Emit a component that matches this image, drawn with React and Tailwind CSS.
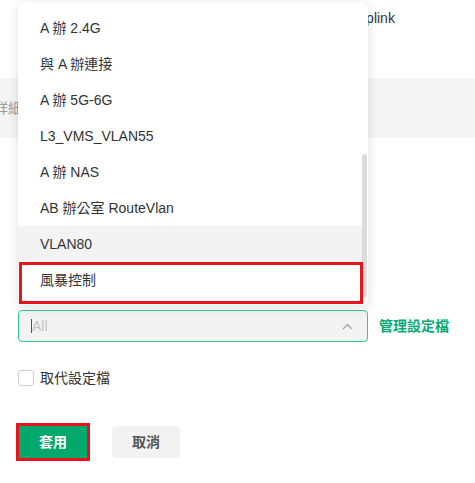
import React from "react";

const FONT = { fontFamily: "'Liberation Sans', Arial, 'Noto Sans CJK TC', sans-serif" };

const items = [
  "A 辦 2.4G",
  "與 A 辦連接",
  "A 辦 5G-6G",
  "L3_VMS_VLAN55",
  "A 辦 NAS",
  "AB 辦公室 RouteVlan",
  "VLAN80",
  "風暴控制",
];

function Dropdown() {
  return (
    <div className="absolute left-[18px] top-[2px] w-[350px] h-[303px] bg-white rounded-[6px] shadow-[0_2px_12px_rgba(0,0,0,0.13)] z-10 flex">
      <ul className="flex-1 pt-[8px]">
        {items.map((t, i) => (
          <li
            key={t}
            className={
              "h-[36px] flex items-center pl-[22px] text-[14px] text-[#333] " +
              (i === 6 ? "bg-[#f3f3f3]" : "")
            }
          >
            {t}
          </li>
        ))}
      </ul>
      <div className="w-[5px] mr-[1px] pt-[152px] pb-[8px]">
        <div className="h-full rounded-full bg-[#dcdcdc]" />
      </div>
      {/* annotation box */}
      <div className="absolute left-[1px] top-[260px] w-[344px] h-[42px] border-[3px] border-[#e8141b]" />
    </div>
  );
}

export default function App() {
  return (
    <div className="relative w-[475px] h-[483px] bg-white overflow-hidden" style={FONT}>
      <div className="h-[78px] pt-[8px] pl-[356px] text-[14px] leading-[20px] text-[#333]">Uplink</div>
      <div className="h-[60px] bg-[#f5f5f5] flex items-center -ml-[6px] text-[14px] text-[#999]">詳細</div>

      <div className="pl-[18px] pt-[172px]">
        <div className="flex items-center gap-[11px]">
          <div className="w-[350px] h-[32px] rounded-[4px] border border-[#2fcb8c] bg-[#f3f3f3] flex items-center pl-[12px] pr-[14px]">
            <span className="w-[1px] h-[14px] bg-[#1f6b4a]" />
            <span className="text-[14px] text-[#c4c4c4] flex-1">All</span>
            <svg width="11" height="7" viewBox="0 0 11 7" fill="none">
              <polyline points="1,6 5.5,1.5 10,6" stroke="#a8a8a8" strokeWidth="1.4" />
            </svg>
          </div>
          <span className="text-[14px] font-bold text-[#0aa875]">管理設定檔</span>
        </div>

        <label className="mt-[28px] flex items-center gap-[6px] h-[16px]">
          <span className="w-[16px] h-[16px] rounded-[3px] border border-[#cfcfcf] bg-white" />
          <span className="text-[14px] text-[#333]">取代設定檔</span>
        </label>

        <div className="mt-[40px] flex items-center gap-[25px]">
          <button className="ml-[1px] w-[68px] h-[32px] bg-[#02a86c] text-white text-[14px] font-bold outline outline-[3px] outline-[#e8141b]">
            套用
          </button>
          <button className="w-[68px] h-[32px] rounded-[4px] bg-[#f2f2f2] text-[#555] text-[14px] font-bold">
            取消
          </button>
        </div>
      </div>

      <Dropdown />
    </div>
  );
}
